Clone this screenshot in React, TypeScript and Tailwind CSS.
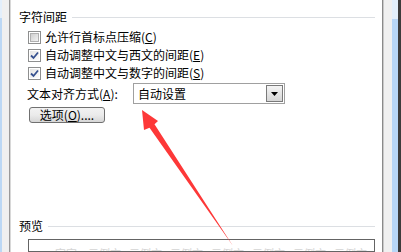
import React from "react";

function Checkbox({ checked }: { checked: boolean }) {
  return (
    <div className="w-[13px] h-[13px] border border-[#8e8f8f] bg-white p-px shrink-0">
      <div
        className={
          "w-full h-full relative " +
          (checked
            ? "bg-gradient-to-br from-[#e4e4e4] to-[#fbfbfb]"
            : "bg-gradient-to-br from-[#cfcfcf] to-[#f2f2f2] border border-[#b0b0b0]")
        }
      >
        {checked && (
          <svg className="absolute left-0 top-0" width="9" height="9" viewBox="0 0 9 9">
            <path d="M1 4.5 L3.5 7 L8 1.5" fill="none" stroke="#35508f" strokeWidth="1.8" />
          </svg>
        )}
      </div>
    </div>
  );
}

function Mn({ c }: { c: string }) {
  return (
    <span>
      (<span className="underline underline-offset-1">{c}</span>)
    </span>
  );
}

export default function App() {
  return (
    <div className="w-[401px] h-[252px] flex overflow-hidden bg-white relative text-[12px] leading-[14px] text-black font-['Noto_Sans_CJK_SC','Noto_Sans',sans-serif]">
      {/* left frame */}
      <div className="w-[2px] shrink-0 flex flex-col">
        <div className="h-[18px] bg-[#e3effb]" />
        <div className="flex-1 bg-[#bcd8f5]" />
      </div>
      <div className="w-[7px] shrink-0 bg-[#f0f0f0]" />
      <div className="w-px shrink-0 bg-[#9a9a9a]" />
      <div className="w-px shrink-0 bg-[#d8d8d8]" />

      {/* main */}
      <div className="flex-1 min-w-0 flex flex-col pl-[8px]">
        <div className="flex items-center h-[14px] mt-[10px]">
          <span>字符间距</span>
          <div className="flex-1 h-px bg-[#dcdfe3] ml-[5px] mr-[7px]" />
        </div>

        <div className="flex flex-col mt-[4px] ml-[9px]">
          <div className="h-[18px] flex items-center gap-[4px]">
            <Checkbox checked={false} />
            <span>
              允许行首标点压缩<Mn c="C" />
            </span>
          </div>
          <div className="h-[18px] flex items-center gap-[4px]">
            <Checkbox checked />
            <span>
              自动调整中文与西文的间距<Mn c="E" />
            </span>
          </div>
          <div className="h-[18px] flex items-center gap-[4px]">
            <Checkbox checked />
            <span>
              自动调整中文与数字的间距<Mn c="S" />
            </span>
          </div>
        </div>

        <div className="flex items-center mt-px ml-[8px] h-[21px]">
          <span className="w-[106px] shrink-0">
            文本对齐方式<Mn c="A" />:
          </span>
          <div className="w-[152px] shrink-0 h-[21px] border border-[#a0a0a0] flex items-center p-px">
            <span className="flex-1 pl-[3px]">自动设置</span>
            <div className="w-[17px] h-full border border-[#7a7a7a] bg-gradient-to-b from-[#f4f4f4] to-[#d6d6d6] flex items-center justify-center">
              <svg width="7" height="4" viewBox="0 0 7 4">
                <path d="M0 0 H7 L3.5 4 Z" fill="#000" />
              </svg>
            </div>
          </div>
        </div>

        <div className="mt-[3px] ml-[10px] w-[76px] h-[19px] border border-[#707070] rounded-[3px] bg-gradient-to-b from-[#f2f2f2] via-[#ebebeb] to-[#d6d6d6] flex items-center justify-center">
          <span>
            选项<Mn c="O" />....
          </span>
        </div>

        <div className="flex items-center h-[14px] mt-[96px]">
          <span>预览</span>
          <div className="flex-1 h-px bg-[#dcdfe3] ml-[5px] mr-[7px]" />
        </div>

        <div className="mt-[6px] ml-[9px] mr-[7px] h-[40px] border border-[#646464] pt-[6px] pl-[26px] overflow-hidden flex gap-[8px] text-[11px] text-[#d4d4d4] whitespace-nowrap">
          <span>字字,</span>
          <span>示例文</span>
          <span>示例文</span>
          <span>示例文</span>
          <span>示例文</span>
          <span>示例文</span>
          <span>示例文</span>
          <span>示例文</span>
        </div>
      </div>

      {/* right frame */}
      <div className="w-px shrink-0 bg-[#8a8a8a]" />
      <div className="w-px shrink-0 bg-[#c8c8c8]" />
      <div className="w-[8px] shrink-0 bg-[#f0f0f0]" />
      <div className="w-[6px] shrink-0 flex flex-col">
        <div className="h-[19px] bg-[#e3effb]" />
        <div className="flex-1 bg-[#b8d6f6]" />
      </div>
      <div className="w-[3px] shrink-0 bg-[#3c3c3c]" />

      {/* red arrow */}
      <svg className="absolute left-0 top-0 pointer-events-none" width="401" height="252" viewBox="0 0 401 252">
        <polygon
          points="142,110 158,121 154.5,124.3 233,246 149.5,127.7 144,130"
          fill="#fd3838"
        />
      </svg>
    </div>
  );
}
